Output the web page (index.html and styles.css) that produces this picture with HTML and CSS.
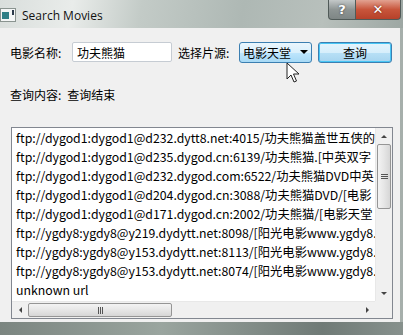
FILE: index.html
```html
<!DOCTYPE html>
<html lang="zh-CN">
<head>
    <meta charset="UTF-8">
    <title>Search Movies</title>
    <link rel="stylesheet" href="styles.css">
</head>
<body>
    <div class="window">
        <div class="titlebar">
            <svg class="app-icon" width="16" height="14" viewBox="0 0 16 14">
                <rect x="0.5" y="0.5" width="15" height="13" fill="#f4f6f6" stroke="#8a9490"/>
                <rect x="2" y="4" width="7" height="7" fill="#2f7f86"/>
                <rect x="12" y="2" width="2" height="5" fill="#2b3a4a"/>
            </svg>
            <span class="title">Search Movies</span>
            <div class="caption">
                <div class="cap-btn help">?</div>
                <div class="cap-btn close">&#x2715;</div>
            </div>
        </div>

        <div class="client">
            <div class="search-row">
                <span class="label name-label">电影名称:</span>
                <input class="name-input" type="text" value="功夫熊猫">
                <span class="label source-label">选择片源:</span>
                <div class="combo">电影天堂<span class="arrow"></span></div>
                <button class="search-btn">查询</button>
            </div>

            <div class="status-row">
                <span class="label">查询内容:</span>
                <span>查询结束</span>
            </div>

            <div class="list">
                <div class="list-items">
                    <div class="item">ftp://dygod1:dygod1@d232.dytt8.net:4015/功夫熊猫盖世五侠的</div>
                    <div class="item">ftp://dygod1:dygod1@d235.dygod.cn:6139/功夫熊猫.[中英双字</div>
                    <div class="item">ftp://dygod1:dygod1@d232.dygod.com:6522/功夫熊猫DVD中英</div>
                    <div class="item">ftp://dygod1:dygod1@d204.dygod.cn:3088/功夫熊猫DVD/[电影</div>
                    <div class="item">ftp://dygod1:dygod1@d171.dygod.cn:2002/功夫熊猫/[电影天堂</div>
                    <div class="item">ftp://ygdy8:ygdy8@y219.dydytt.net:8098/[阳光电影www.ygdy8.c</div>
                    <div class="item">ftp://ygdy8:ygdy8@y153.dydytt.net:8113/[阳光电影www.ygdy8.c</div>
                    <div class="item">ftp://ygdy8:ygdy8@y153.dydytt.net:8074/[阳光电影www.ygdy8.c</div>
                    <div class="item">unknown url</div>
                </div>
                <div class="vscroll">
                    <div class="sb-arrow up"></div>
                    <div class="vthumb"><span class="grip-h"></span></div>
                    <div class="sb-track"></div>
                    <div class="sb-arrow down"></div>
                </div>
                <div class="hscroll">
                    <div class="sb-arrow left"></div>
                    <div class="hthumb"><span class="grip-v"></span></div>
                    <div class="sb-track"></div>
                    <div class="sb-arrow right"></div>
                </div>
                <div class="corner"></div>
            </div>
        </div>
        <div class="bottom-frame"></div>

        <svg class="cursor" width="14" height="22" viewBox="0 0 14 22">
            <path d="M1 1 L1 17 L5 13 L8 20 L10.5 19 L7.5 12 L13 12 Z" fill="#fff" stroke="#222" stroke-width="1" stroke-linejoin="round"/>
        </svg>
    </div>
</body>
</html>
```

FILE: styles.css
```css
* { margin: 0; padding: 0; box-sizing: border-box; }
body {
    width: 403px;
    height: 335px;
    overflow: hidden;
    background: #9ea8a4;
    font-family: "Noto Sans CJK SC", "Noto Sans", sans-serif;
    font-size: 12px;
    color: #000;
}
.window {
    position: relative;
    width: 403px;
    height: 335px;
    display: flex;
    flex-direction: column;
    background: linear-gradient(90deg, #b9c2be 0%, #c9d0cd 40%, #b2bbb7 70%, #a6afab 100%);
}
.titlebar {
    height: 28px;
    display: flex;
    align-items: center;
    position: relative;
    background: linear-gradient(100deg, #d9dedc 0%, #e9ecea 18%, #c3cbc7 35%, #aeb8b4 60%, #b8c0bc 80%, #9da7a3 100%);
}
.app-icon {
    margin-top: 2px;
}
.title {
    margin-left: 6px;
    margin-top: 2px;
    font-family: "Open Sans", "DejaVu Sans", sans-serif;
    font-size: 12px;
    color: #111;
}
.caption {
    position: absolute;
    top: 0;
    right: 2px;
    display: flex;
}
.cap-btn {
    height: 20px;
    display: flex;
    align-items: center;
    justify-content: center;
    font-family: "DejaVu Sans", sans-serif;
    font-weight: bold;
    color: #fff;
    border: 1px solid #505a58;
    border-top: none;
}
.help {
    width: 28px;
    font-size: 13px;
    border-radius: 0 0 0 4px;
    background: linear-gradient(#c3c8c8, #8e9594 50%, #7e8685);
    text-shadow: 0 0 2px #333;
}
.close {
    width: 45px;
    font-size: 13px;
    border-left: none;
    border-radius: 0 0 4px 0;
    background: linear-gradient(#e2a291, #c8553b 50%, #b6412a);
    text-shadow: 0 0 2px #5a1a0c;
}
.client {
    height: 294px;
    margin-right: 3px;
    background: #f0f0f0;
    display: flex;
    flex-direction: column;
}
.search-row {
    display: flex;
    align-items: center;
    height: 20px;
    margin-top: 14px;
    padding-left: 10px;
}
.label {
    margin-right: 6px;
}
.name-label {
    width: 62px;
    margin-right: 0;
}
.source-label {
    width: 61px;
    margin-right: 0;
}
.name-input {
    width: 100px;
    height: 20px;
    padding: 0 4px;
    margin-right: 6px;
    border: 1px solid #c6ccd3;
    border-radius: 2px;
    background: #fff;
    font-family: inherit;
    font-size: 12px;
}
.combo {
    width: 73px;
    height: 21px;
    padding-left: 3px;
    display: flex;
    align-items: center;
    border: 1px solid #3c7fb1;
    border-radius: 3px;
    background: linear-gradient(#eaf6fd, #d9f0fc 50%, #bee6fd 51%, #a7d9f5);
}
.arrow {
    margin-left: 9px;
    border-left: 4px solid transparent;
    border-right: 4px solid transparent;
    border-top: 4px solid #000;
}
.search-btn {
    width: 74px;
    height: 21px;
    margin-left: 6px;
    border: 1px solid #3c7fb1;
    border-radius: 3px;
    box-shadow: inset 0 0 0 1px #48c6f5;
    background: linear-gradient(#e5f4fc, #d6eefb 50%, #b8e0f6 51%, #a6d4ef);
    font-family: inherit;
    font-size: 12px;
}
.status-row {
    display: flex;
    align-items: center;
    height: 16px;
    margin-top: 24px;
    padding-left: 10px;
}
.list {
    width: 382px;
    height: 192px;
    margin: 25px 0 0 11px;
    border: 1px solid #828790;
    background: #fff;
    display: grid;
    grid-template-columns: 1fr 17px;
    grid-template-rows: 1fr 17px;
    overflow: hidden;
}
.list-items {
    padding: 1px 0 0 4px;
    overflow: hidden;
    white-space: nowrap;
    font-size: 12.3px;
}
.item {
    height: 19px;
    line-height: 19px;
}
.vscroll {
    display: flex;
    flex-direction: column;
    background: #f0f0f0;
    border-left: 1px solid #e8e8e8;
}
.hscroll {
    display: flex;
    background: #f0f0f0;
    border-top: 1px solid #e8e8e8;
}
.corner {
    background: #f0f0f0;
}
.sb-arrow {
    width: 16px;
    height: 16px;
    flex: none;
    display: flex;
    align-items: center;
    justify-content: center;
}
.sb-arrow::after {
    content: "";
    border: 3px solid transparent;
}
.up::after { border-bottom: 3px solid #444; border-top: 0; }
.down::after { border-top: 3px solid #444; border-bottom: 0; }
.left::after { border-right: 3px solid #444; border-left: 0; }
.right::after { border-left: 3px solid #444; border-right: 0; }
.sb-track {
    flex: 1;
}
.vthumb {
    height: 65px;
    margin: 0 1px;
    border: 1px solid #959595;
    border-radius: 2px;
    background: linear-gradient(90deg, #f3f3f3, #e6e6e6 50%, #d6d6d6);
    display: flex;
    align-items: center;
    justify-content: center;
}
.hthumb {
    width: 144px;
    margin: 1px 0;
    border: 1px solid #959595;
    border-radius: 2px;
    background: linear-gradient(#f3f3f3, #e6e6e6 50%, #d6d6d6);
    display: flex;
    align-items: center;
    justify-content: center;
}
.grip-h {
    width: 7px;
    height: 5px;
    border-top: 1px solid #555;
    border-bottom: 1px solid #555;
    background: linear-gradient(transparent 40%, #555 40%, #555 60%, transparent 60%);
}
.grip-v {
    width: 5px;
    height: 7px;
    border-left: 1px solid #555;
    border-right: 1px solid #555;
    background: linear-gradient(90deg, transparent 40%, #555 40%, #555 60%, transparent 60%);
}
.bottom-frame {
    flex: 1;
    background: linear-gradient(90deg, #7b8580, #9aa59f 40%, #6f7a76 80%, #87918d);
}
.cursor {
    position: absolute;
    left: 286px;
    top: 62px;
}
```
